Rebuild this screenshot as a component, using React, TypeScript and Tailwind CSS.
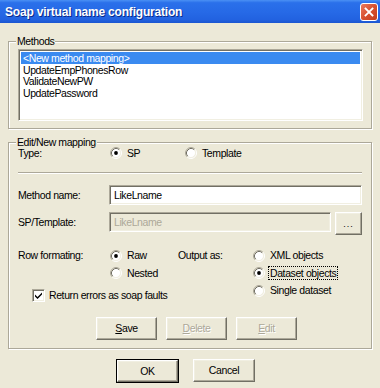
import React from "react";

const ui = "font-['Liberation_Sans',Arial,sans-serif] text-[10.5px] tracking-[-0.4px] leading-none text-black";

function Radio({ checked }: { checked?: boolean }) {
  return (
    <svg width="12" height="12" viewBox="0 0 12 12" className="shrink-0">
      <circle cx="6" cy="6" r="4.5" fill="#fff" />
      <path d="M2.11 9.89 A5.5 5.5 0 0 1 9.89 2.11" stroke="#aca899" fill="none" />
      <path d="M9.89 2.11 A5.5 5.5 0 0 1 2.11 9.89" stroke="#ffffff" fill="none" />
      <path d="M2.82 9.18 A4.5 4.5 0 0 1 9.18 2.82" stroke="#716f64" fill="none" />
      <path d="M9.18 2.82 A4.5 4.5 0 0 1 2.82 9.18" stroke="#f1efe2" fill="none" />
      {checked && <circle cx="6" cy="6" r="1.9" fill="#000" />}
    </svg>
  );
}

function RadioItem({ checked, label, focus }: { checked?: boolean; label: string; focus?: boolean }) {
  return (
    <div className="flex items-center">
      <Radio checked={checked} />
      <span className={"ml-[4px] px-[1px] py-[1px] " + (focus ? "outline outline-1 outline-dotted outline-black" : "")}>{label}</span>
    </div>
  );
}

function Checkbox() {
  return (
    <div className="w-[13px] h-[13px] bg-white border border-t-[#aca899] border-l-[#aca899] border-r-white border-b-white shadow-[inset_1px_1px_0_#716f64,inset_-1px_-1px_0_#f1efe2] flex items-center justify-center">
      <svg width="9" height="9" viewBox="0 0 9 9">
        <path d="M1 3.5 L3.5 6 L8 1.5 L8 3.5 L3.5 8 L1 5.5 Z" fill="#000" />
      </svg>
    </div>
  );
}

function Button({ children, disabled, def, w = "w-[61px]" }: { children: React.ReactNode; disabled?: boolean; def?: boolean; w?: string }) {
  const inner = (
    <div
      className={
        "h-full flex items-center justify-center bg-[#ece9d8] border border-t-white border-l-white border-r-[#716f64] border-b-[#716f64] shadow-[inset_-1px_-1px_0_#aca899,inset_1px_1px_0_#f1efe2] " +
        (disabled ? "text-[#aca899] [text-shadow:1px_1px_0_#fff]" : "")
      }
    >
      {children}
    </div>
  );
  if (def) {
    return <div className={w + " h-[24px] border border-black"}>{inner}</div>;
  }
  return <div className={w + " h-[23px]"}>{inner}</div>;
}

function Group({ label, className, children }: { label: string; className?: string; children: React.ReactNode }) {
  return (
    <div className={"relative border border-[#aca899] shadow-[inset_1px_1px_0_#fff,1px_1px_0_#fff] " + (className ?? "")}>
      <div className="absolute left-[7px] top-[-7px] bg-[#ece9d8] px-[1px] leading-[13px]">{label}</div>
      {children}
    </div>
  );
}

const sunken =
  "border border-t-[#aca899] border-l-[#aca899] border-r-white border-b-white shadow-[inset_1px_1px_0_#716f64,inset_-1px_-1px_0_#f1efe2]";

export default function App() {
  return (
    <div className={"w-[380px] h-[388px] bg-[#ece9d8] overflow-hidden " + ui}>
      {/* Title bar */}
      <div className="h-[23px] flex items-center justify-between pl-[5px] pr-[2px] bg-[linear-gradient(to_bottom,#4a90f4_0%,#2a70ea_12%,#2669e6_55%,#2262e0_85%,#1a56d0_100%)]">
        <span className="font-['Liberation_Sans',Arial,sans-serif] font-bold text-[12px] tracking-[-0.2px] text-white [text-shadow:1px_1px_0_#0a2a8a]">
          Soap virtual name configuration
        </span>
        <div className="w-[18px] h-[18px] rounded-[3px] border border-white bg-[linear-gradient(135deg,#ea7a5f_0%,#d8502f_50%,#c23d1c_100%)] flex items-center justify-center">
          <svg width="10" height="10" viewBox="0 0 10 10">
            <path d="M1.5 1.5 L8.5 8.5 M8.5 1.5 L1.5 8.5" stroke="#fff" strokeWidth="1.8" strokeLinecap="square" />
          </svg>
        </div>
      </div>

      <div className="pl-[8px] pr-[8px]">
        {/* Methods */}
        <Group label="Methods" className="mt-[18px] h-[88px] pl-[9px] pr-[8px] pt-[7px]">
          <div className={"h-[72px] bg-white p-[2px] " + sunken}>
            <div className="h-[12px] flex items-center pl-[2px] bg-[#3a8af0] text-white">&lt;New method mapping&gt;</div>
            <div className="h-[11.5px] flex items-center pl-[2px]">UpdateEmpPhonesRow</div>
            <div className="h-[11.5px] flex items-center pl-[2px]">ValidateNewPW</div>
            <div className="h-[11.5px] flex items-center pl-[2px]">UpdatePassword</div>
          </div>
        </Group>

        {/* Edit/New mapping */}
        <Group label="Edit/New mapping" className="mt-[13px] h-[207px] pl-[9px] pr-[9px] pt-[3px]">
          <div className="h-[14px] flex items-center">
            <span className="w-[92px]">Type:</span>
            <div className="w-[75px]">
              <RadioItem checked label="SP" />
            </div>
            <RadioItem label="Template" />
          </div>
          <div className="mt-[12px] h-[2px] border-t border-t-[#aca899] border-b border-b-white" />

          <div className="mt-[11px] flex items-center">
            <span className="w-[91px]">Method name:</span>
            <div className={"flex-1 h-[20px] bg-white flex items-center pl-[4px] " + sunken}>LikeLname</div>
          </div>

          <div className="mt-[7px] flex items-start">
            <span className="w-[91px] h-[20px] flex items-center">SP/Template:</span>
            <div className={"w-[222px] h-[20px] flex items-center pl-[4px] text-[#aca899] " + sunken}>LikeLname</div>
            <div className="ml-[4px]">
              <Button w="w-[27px]">
                <span className="text-[9px] tracking-[1px] mt-[2px]">...</span>
              </Button>
            </div>
          </div>

          <div className="mt-[12px] flex">
            <div className="w-[235px]">
              <div className="h-[17px] flex items-center">
                <span className="w-[92px]">Row formating:</span>
                <div className="w-[68px]">
                  <RadioItem checked label="Raw" />
                </div>
                <span>Output as:</span>
              </div>
              <div className="h-[18px] flex items-center">
                <span className="w-[92px]" />
                <RadioItem label="Nested" />
              </div>
              <div className="mt-[6px] h-[14px] flex items-center pl-[14px]">
                <Checkbox />
                <span className="ml-[4px]">Return errors as soap faults</span>
              </div>
            </div>
            <div>
              <div className="h-[17px] flex items-center">
                <RadioItem label="XML objects" />
              </div>
              <div className="h-[18px] flex items-center">
                <RadioItem checked focus label="Dataset objects" />
              </div>
              <div className="h-[17px] flex items-center">
                <RadioItem label="Single dataset" />
              </div>
            </div>
          </div>

          <div className="mt-[15px] flex pl-[78px] gap-[9px]">
            <Button>
              <span>
                <u>S</u>ave
              </span>
            </Button>
            <Button disabled>
              <span>
                <u>D</u>elete
              </span>
            </Button>
            <Button disabled>
              <span>
                <u>E</u>dit
              </span>
            </Button>
          </div>
        </Group>

        <div className="mt-[10px] flex pl-[108px] gap-[14px]">
          <Button def w="w-[63px]">OK</Button>
          <div className="pt-[0px]">
            <Button w="w-[62px]">Cancel</Button>
          </div>
        </div>
      </div>
    </div>
  );
}
